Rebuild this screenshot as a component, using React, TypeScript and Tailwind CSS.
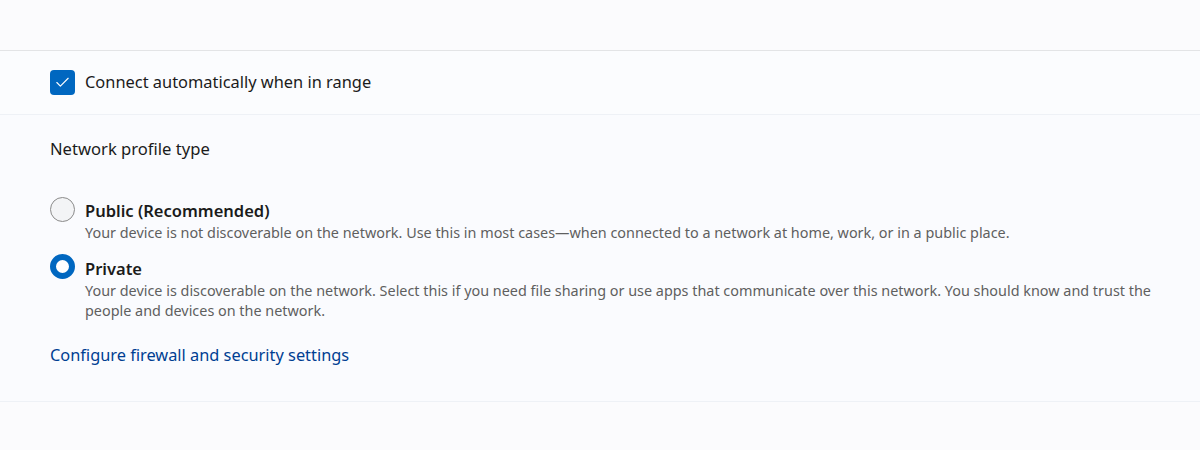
import { Check } from "lucide-react"

const font = { fontFamily: '"Noto Sans", "Open Sans", sans-serif' }

function Radio({ checked }: { checked: boolean }) {
  if (checked) {
    return <div className="w-[25px] h-[25px] rounded-full bg-white border-[6px] border-[#0067c0] shrink-0" />
  }
  return <div className="w-[25px] h-[25px] rounded-full bg-[#f3f4f6] border border-[#8b8b8b] shrink-0" />
}

export default function App() {
  return (
    <div className="w-[1200px] h-[450px] bg-[#fbfbfd] text-[#1b1b1b] overflow-hidden" style={font}>
      <div className="h-[51px] border-b border-[#e3e4e6]" />

      <div className="h-[64px] flex items-center gap-[10px] px-[50px] border-b border-[#eef1f6] bg-[#fbfcfe]">
        <div className="w-[25px] h-[25px] rounded-[4px] bg-[#0067c0] flex items-center justify-center">
          <Check className="w-[17px] h-[17px] text-white" strokeWidth={1.6} />
        </div>
        <span className="text-[16.4px]">Connect automatically when in range</span>
      </div>

      <div className="h-[287px] pl-[50px] pr-[40px] pt-[20px] border-b border-[#eef1f6] bg-[#fafbfe]">
        <div className="text-[16.6px] leading-[24px] mt-[2px]">Network profile type</div>

        <div className="mt-[36px] flex gap-[10px]">
          <Radio checked={false} />
          <div className="mt-[2px]">
            <div className="text-[16.5px] font-semibold leading-[24px]">Public (Recommended)</div>
            <div className="text-[14.4px] leading-[20px] text-[#5f5f5f]">
              Your device is not discoverable on the network. Use this in most cases—when connected to a network at home, work, or in a public place.
            </div>
          </div>
        </div>

        <div className="mt-[11px] flex gap-[10px]">
          <Radio checked={true} />
          <div className="mt-[3px]">
            <div className="text-[16.5px] font-semibold leading-[24px]">Private</div>
            <div className="text-[14.4px] leading-[20px] text-[#5f5f5f]">
              Your device is discoverable on the network. Select this if you need file sharing or use apps that communicate over this network. You should know and trust the people and devices on the network.
            </div>
          </div>
        </div>

        <a className="block mt-[22px] text-[16.35px] leading-[24px] text-[#003e92]">Configure firewall and security settings</a>
      </div>
    </div>
  )
}
